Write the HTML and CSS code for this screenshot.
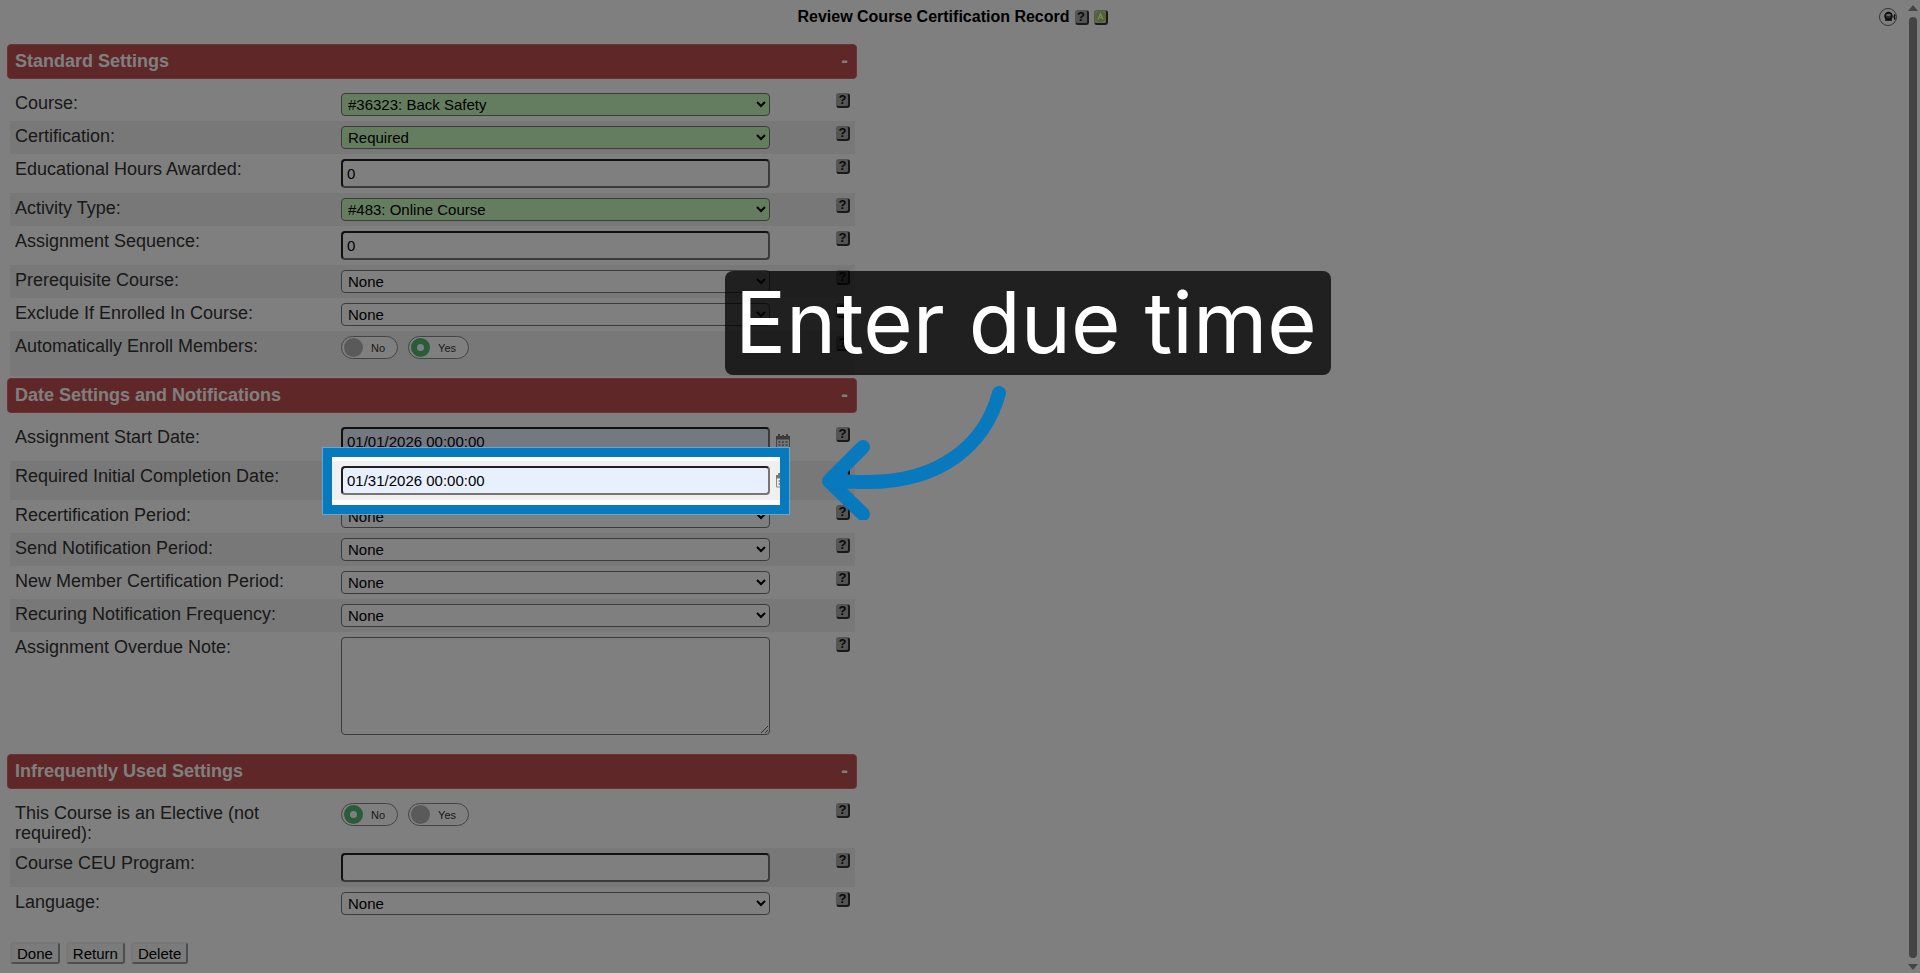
FILE: index.html
```html
<!DOCTYPE html>
<html lang="en">
<head>
<meta charset="UTF-8">
<title>Review Course Certification Record</title>
<link rel="stylesheet" href="styles.css">
</head>
<body>
<!-- Shared icons -->
<svg class="defs" aria-hidden="true">
  <symbol id="calendar" viewBox="0 0 16 17">
    <path d="M1.500 3.500h13v11.500h-13z" fill="#eee" stroke="#888"/>
    <path d="M1 3h14v3.500H1z" fill="#777"/>
    <path d="M4 1v3M12 1v3M8 2v2" stroke="#777" stroke-width="2"/>
    <path d="M3.500 9h2M7 9h2M10.500 9h2M3.500 12h2M7 12h2M10.500 12h2" stroke="#777" stroke-width="1.600"/>
  </symbol>
</svg>

<header class="page-head">
  <h1>Review Course Certification Record</h1>
  <button class="help" aria-label="Help">?</button>
  <button class="help audit" aria-label="Audit"><svg width="11" height="11" viewBox="0 0 11 11"><circle cx="5.500" cy="5.500" r="5.500" fill="#a4cc50"/><path d="M3 8.500L5.500 2.500L8 8.500M4 6.500h3" fill="none" stroke="#fff" stroke-width="1.200"/></svg></button>
  <button class="account" aria-label="Account"><svg width="18" height="18" viewBox="0 0 18 18"><circle cx="9" cy="9" r="8.500" fill="none" stroke="#666"/><circle cx="9.500" cy="8" r="3.500" fill="#555" stroke="#111" stroke-width="1.500"/><path d="M7.500 7h4" stroke="#eee" stroke-width="1.500"/><path d="M6 12h7M16 6.500q-1.500 2.500 0 5" fill="none" stroke="#111" stroke-width="1.500"/></svg></button>
</header>

<form class="record">
  <h2 class="bar">Standard Settings <button type="button" aria-label="Collapse Standard Settings">-</button></h2>
  <div class="rows">
    <div class="row"><label for="course">Course:</label><div class="field"><select id="course" class="set"><option>#36323: Back Safety</option></select></div><button type="button" class="help" aria-label="Help">?</button></div>
    <div class="row"><label for="cert">Certification:</label><div class="field"><select id="cert" class="set"><option>Required</option></select></div><button type="button" class="help" aria-label="Help">?</button></div>
    <div class="row"><label for="hours">Educational Hours Awarded:</label><div class="field"><input type="text" id="hours" value="0"></div><button type="button" class="help" aria-label="Help">?</button></div>
    <div class="row"><label for="activity">Activity Type:</label><div class="field"><select id="activity" class="set"><option>#483: Online Course</option></select></div><button type="button" class="help" aria-label="Help">?</button></div>
    <div class="row"><label for="sequence">Assignment Sequence:</label><div class="field"><input type="text" id="sequence" value="0"></div><button type="button" class="help" aria-label="Help">?</button></div>
    <div class="row"><label for="prereq">Prerequisite Course:</label><div class="field"><select id="prereq"><option>None</option></select></div><button type="button" class="help" aria-label="Help">?</button></div>
    <div class="row"><label for="exclude">Exclude If Enrolled In Course:</label><div class="field"><select id="exclude"><option>None</option></select></div><button type="button" class="help" aria-label="Help">?</button></div>
    <div class="row last"><span class="name" id="enroll">Automatically Enroll Members:</span>
      <div class="field" role="radiogroup" aria-labelledby="enroll">
        <label class="pill"><input type="radio" name="enroll">No</label>
        <label class="pill"><input type="radio" name="enroll" checked>Yes</label>
      </div><button type="button" class="help" aria-label="Help">?</button></div>
  </div>

  <h2 class="bar">Date Settings and Notifications <button type="button" aria-label="Collapse Date Settings and Notifications">-</button></h2>
  <div class="rows">
    <div class="row"><label for="start">Assignment Start Date:</label><div class="field"><input type="text" id="start" class="date" value="01/01/2026 00:00:00"><svg class="cal"><use href="#calendar"/></svg></div><button type="button" class="help" aria-label="Help">?</button></div>
    <div class="row"><label for="due">Required Initial Completion Date:</label>
      <div class="field"><input type="text" id="due" class="date" value="01/31/2026 00:00:00"><svg class="cal"><use href="#calendar"/></svg>
        <div class="spotlight"></div>
        <div class="tip">Enter due time</div>
        <svg class="arrow" viewBox="0 0 190 140"><path d="M179 13C165 65 120 102 48 102C34 102 21 101 9 101M43 67L9 101L43 134"/></svg>
      </div><button type="button" class="help" aria-label="Help">?</button></div>
    <div class="row"><label for="recert">Recertification Period:</label><div class="field"><select id="recert"><option>None</option></select></div><button type="button" class="help" aria-label="Help">?</button></div>
    <div class="row"><label for="notify">Send Notification Period:</label><div class="field"><select id="notify"><option>None</option></select></div><button type="button" class="help" aria-label="Help">?</button></div>
    <div class="row"><label for="member">New Member Certification Period:</label><div class="field"><select id="member"><option>None</option></select></div><button type="button" class="help" aria-label="Help">?</button></div>
    <div class="row"><label for="freq">Recuring Notification Frequency:</label><div class="field"><select id="freq"><option>None</option></select></div><button type="button" class="help" aria-label="Help">?</button></div>
    <div class="row last"><label for="note">Assignment Overdue Note:</label><div class="field"><textarea id="note"></textarea></div><button type="button" class="help" aria-label="Help">?</button></div>
  </div>

  <h2 class="bar">Infrequently Used Settings <button type="button" aria-label="Collapse Infrequently Used Settings">-</button></h2>
  <div class="rows">
    <div class="row"><span class="name" id="elective">This Course is an Elective (not required):</span>
      <div class="field" role="radiogroup" aria-labelledby="elective">
        <label class="pill"><input type="radio" name="elective" checked>No</label>
        <label class="pill"><input type="radio" name="elective">Yes</label>
      </div><button type="button" class="help" aria-label="Help">?</button></div>
    <div class="row"><label for="ceu">Course CEU Program:</label><div class="field"><input type="text" id="ceu"></div><button type="button" class="help" aria-label="Help">?</button></div>
    <div class="row"><label for="lang">Language:</label><div class="field"><select id="lang"><option>None</option></select></div><button type="button" class="help" aria-label="Help">?</button></div>
  </div>

  <div class="actions">
    <button type="button">Done</button>
    <button type="button">Return</button>
    <button type="button">Delete</button>
  </div>
</form>

<div class="scrollbar" aria-hidden="true">
  <svg width="10" height="6" viewBox="0 0 10 6"><path d="M5 0L10 6H0z"/></svg>
  <div class="thumb"></div>
  <svg width="10" height="6" viewBox="0 0 10 6"><path d="M0 0h10L5 6z"/></svg>
</div>
</body>
</html>
```
FILE: styles.css
```css
*{box-sizing:border-box;}
body{font-family:Arial, "Liberation Sans", sans-serif;background:#fff;color:#333;margin:0;padding:0 15px 0 0;min-height:100vh;overflow:hidden;}
.defs{display:none;}

/* Page title */
.page-head{position:relative;display:flex;justify-content:center;align-items:center;gap:5px;height:34px;}
.page-head h1{font-size:16px;margin:0;color:#000;}
.account{position:absolute;right:8px;top:8px;width:18px;height:18px;padding:0;border:none;background:none;}
.account svg{display:block;}

/* Small square help buttons */
.help{width:14px;height:15px;padding:0;border:1px solid #aaa;border-right:2px solid #333;border-bottom:2px solid #333;border-radius:3px;background:#aaa;color:#111;font:bold 13px/12px Arial, "Liberation Sans", sans-serif;}
.audit{background:#ccc;}
.audit svg{display:block;}

.record{max-width:865px;padding:10px 8px 0 7px;}
.bar{display:flex;justify-content:space-between;align-items:center;height:35px;margin:0;padding:0 8px 0 7px;border:1px solid #d46464;border-radius:4px;background:#be4e4e;color:#fff;font-size:18px;}
.bar button{border:none;background:none;color:#fff;padding:0 0 2px;font:bold 20px Arial, "Liberation Sans", sans-serif;}
.rows{padding:9px 2px 2px 3px;}
.row{display:grid;grid-template-columns:326px 1fr 14px;align-items:start;padding:5px;}
.row:nth-child(even){background:#f0f0f0;}
.row > label,.name{font-size:18px;line-height:20px;padding-right:50px;}
.field{position:relative;display:flex;align-items:center;gap:5px;}
.row.last{padding-bottom:17px;}

select,input[type=text],textarea{width:429px;font:15px Arial, "Liberation Sans", sans-serif;color:#000;border:1px solid #767676;border-radius:4px;background:#fff;}
select{height:23px;padding:0 0 0 2px;}
select.set{background:#c8fabf;}
input[type=text]{height:29px;padding:1px 4px;border:2px inset #767676;}
input[type=text].date{background:#e8f0fe;}
textarea{display:block;height:98px;}
.cal{width:16px;height:17px;}

/* Yes / No switches */
.pill{display:flex;align-items:center;gap:8px;height:23px;padding:0 12px 0 2px;margin-right:5px;border:1px solid #888;border-radius:12px;background:#fff;font-size:11px;}
.pill input{appearance:none;width:19px;height:19px;margin:0;border-radius:50%;background:#b4b4b4;}
.pill input:checked{border:6px solid #55b874;background:#fff;}

.actions{display:flex;gap:6px;padding:20px 3px 0;}
.actions button{height:22px;padding:0 5px;font:15px Arial, "Liberation Sans", sans-serif;color:#000;border:2px outset #eee;border-radius:3px;background:#f6f6f6;}

/* Guided step: highlight, caption and arrow over the form */
.spotlight{position:absolute;left:-19px;top:-19px;width:468px;height:68px;border:10px solid #0979bd;outline:1px solid #5fa9d6;outline-offset:-1px;box-shadow:0 0 0 2400px rgba(0,0,0,.5);z-index:5;pointer-events:none;}
.tip{position:absolute;left:384px;top:-195px;z-index:6;padding:0 14px 0 10px;border-radius:8px;background:rgba(0,0,0,.75);color:#fff;font:400 85px/104px Inter, sans-serif;white-space:nowrap;}
.arrow{position:absolute;left:479px;top:-86px;width:190px;height:140px;z-index:6;}
.arrow path{fill:none;stroke:#0979bd;stroke-width:14;stroke-linecap:round;stroke-linejoin:round;}

.scrollbar{position:fixed;top:0;right:0;bottom:0;width:15px;display:flex;flex-direction:column;align-items:center;gap:6px;padding:5px 0 3px 1px;}
.scrollbar path{fill:#888;}
.thumb{flex:1;width:8px;border-radius:4px;background:#888;}
```
